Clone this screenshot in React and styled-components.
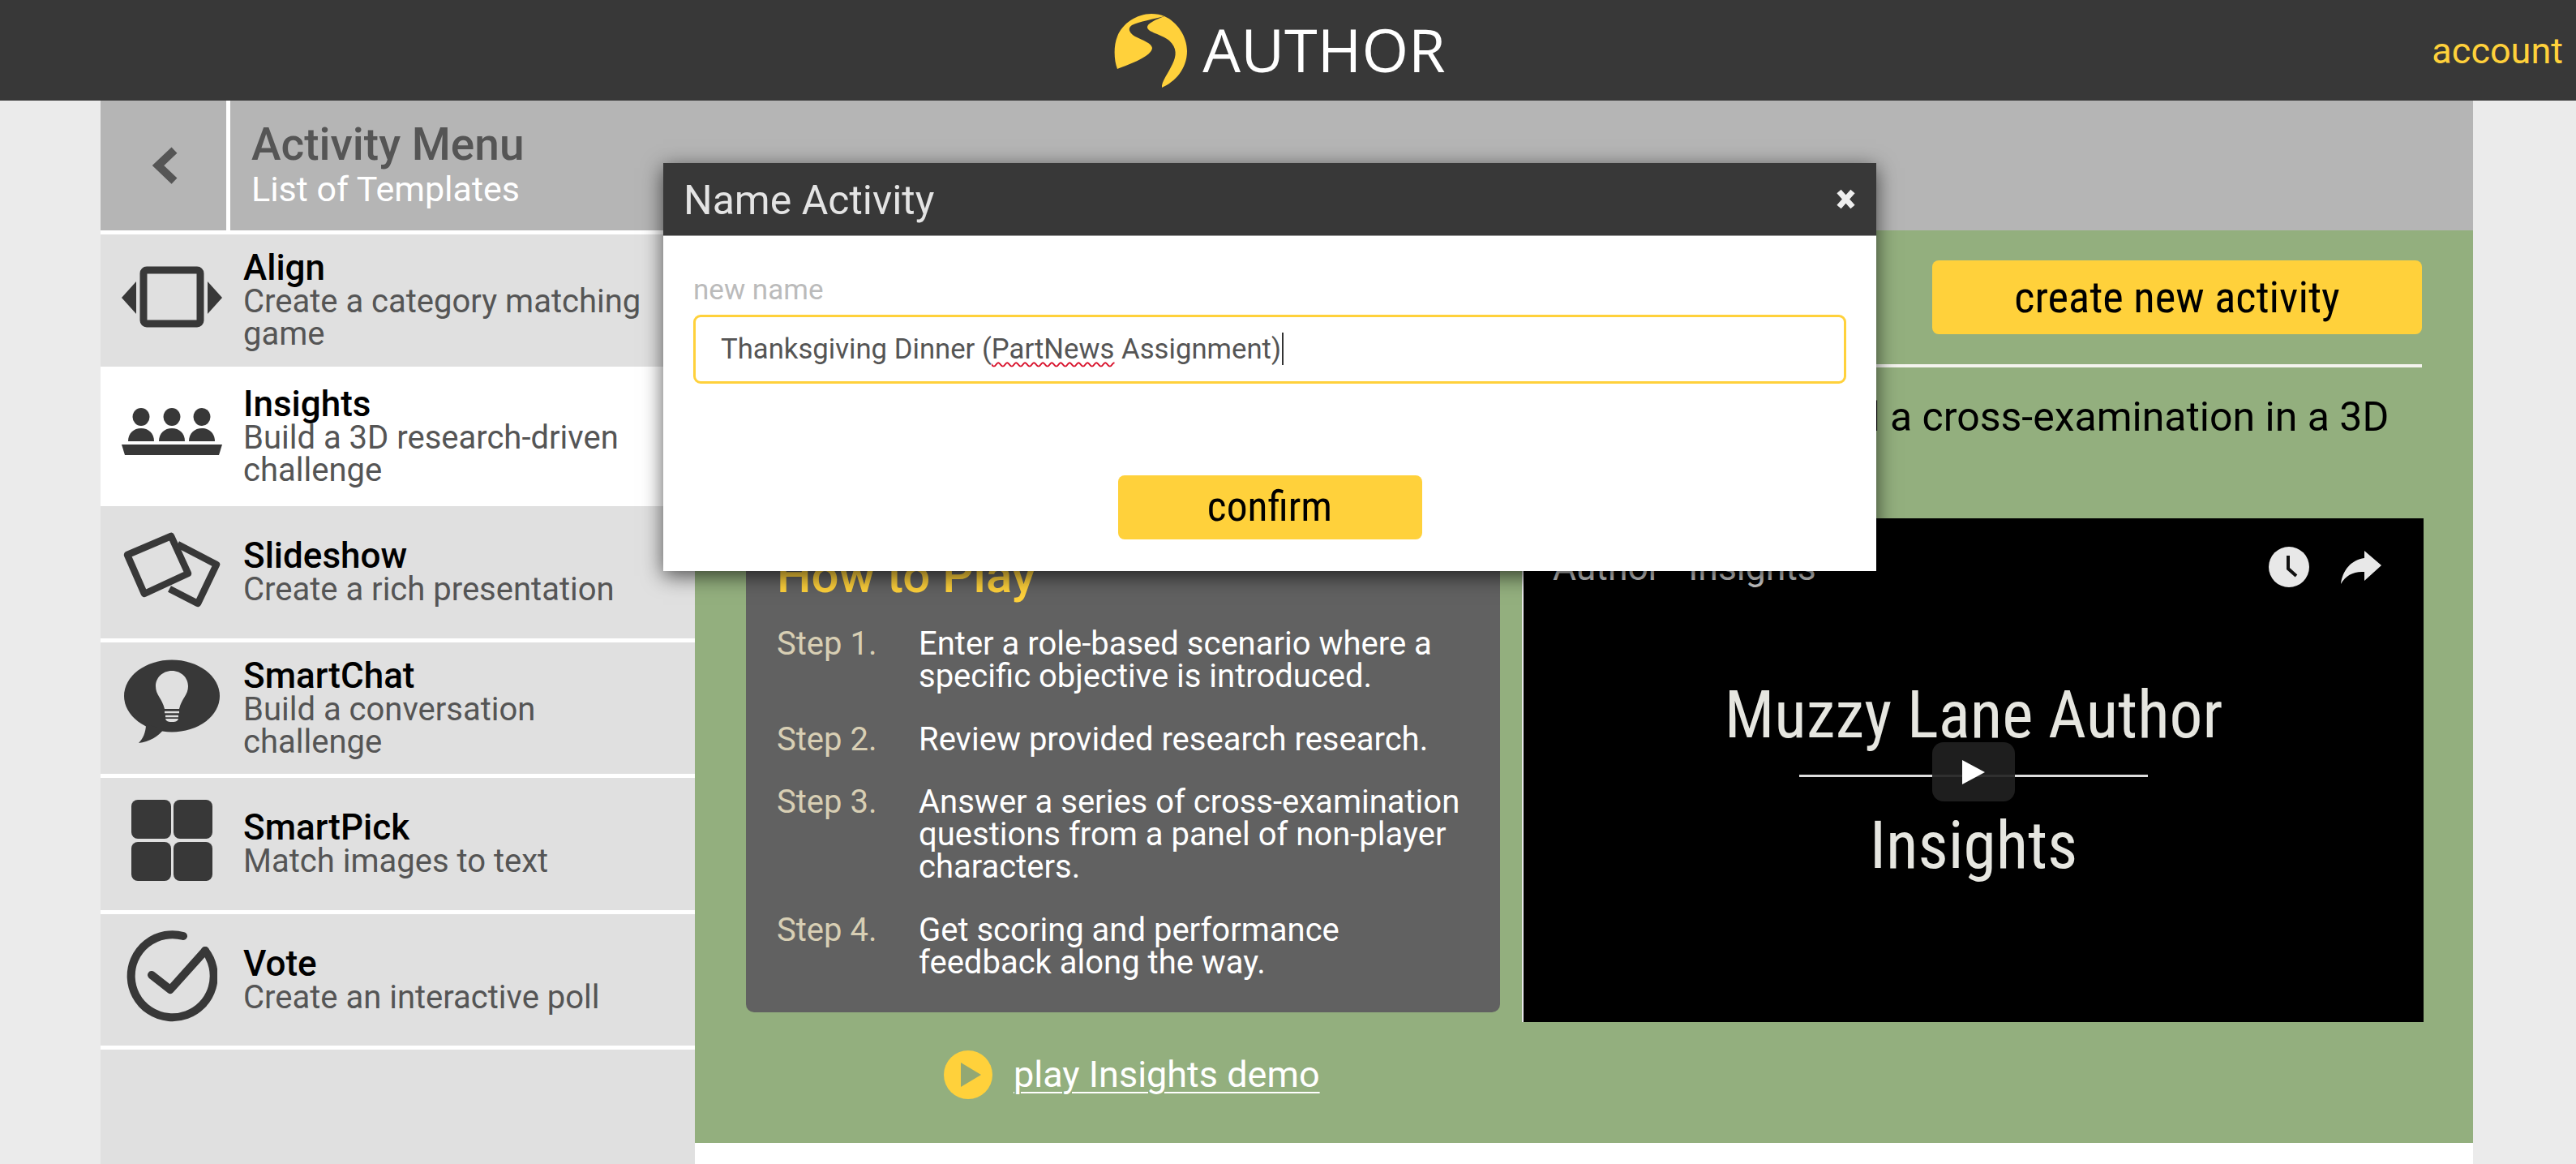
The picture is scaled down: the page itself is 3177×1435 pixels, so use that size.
import React from "react";
import styled, {createGlobalStyle} from "styled-components";

const yellow = "#ffd13b";
const dark = "#383838";

const GlobalStyle = createGlobalStyle`
    html, body {
        margin: 0;
        height: 100%;
        overflow: hidden;
        background: #ebebeb;
        font-family: Roboto, "Liberation Sans", sans-serif;
    }
    #root {
        height: 100%;
    }
`;

const Page = styled.div`
    position: relative;
    display: flex;
    flex-direction: column;
    width: 3177px;
    height: 1435px;
    overflow: hidden;
`;

const Header = styled.header`
    display: grid;
    grid-template-columns: 1fr auto 1fr;
    align-items: center;
    flex: 0 0 124px;
    background: ${dark};
`;

const Brand = styled.div`
    grid-column: 2;
    display: flex;
    align-items: center;
    gap: 18px;
    padding-right: 20px;
`;

const BrandName = styled.span`
    font-family: "Open Sans", sans-serif;
    font-size: 74px;
    font-weight: 500;
    line-height: 120px;
    padding-bottom: 2px;
    color: #fff;
`;

const Account = styled.a`
    justify-self: end;
    padding-right: 16px;
    font-size: 45px;
    color: ${yellow};
`;

const Shell = styled.div`
    display: flex;
    flex-direction: column;
    flex: 1;
    min-height: 0;
    margin: 0 127px 0 124px;
    background: #fff;
`;

const TitleBar = styled.div`
    display: flex;
    flex: 0 0 160px;
    background: #b5b5b5;
`;

const BackCell = styled.div`
    display: flex;
    align-items: center;
    justify-content: center;
    flex: 0 0 160px;
    box-sizing: border-box;
    padding-left: 4px;
    border-right: 5px solid #fff;
`;

const TitleText = styled.div`
    padding: 24px 0 0 26px;
`;

const MenuTitle = styled.div`
    font-size: 55px;
    line-height: 60px;
    font-weight: 500;
    color: #555;
`;

const MenuSubtitle = styled.div`
    font-size: 43px;
    line-height: 50px;
    color: #fff;
`;

const Body = styled.div`
    display: flex;
    flex: 1;
    min-height: 0;
`;

const Sidebar = styled.nav`
    flex: 0 0 733px;
    box-sizing: border-box;
    padding-top: 5px;
    background: #e0e0e0;
    box-shadow: inset 0 5px 0 #fff;
`;

const Item = styled.div`
    display: flex;
    align-items: center;
    box-sizing: border-box;
    height: 167.5px;
    border-bottom: 5px solid #fff;
    background: ${props => (props.$active ? "#fff" : "#e0e0e0")};
`;

const ItemIcon = styled.div`
    display: flex;
    justify-content: center;
    flex: 0 0 176px;
    margin-bottom: ${props => props.$lift}px;
`;

const ItemText = styled.div`
    width: 510px;
`;

const ItemTitle = styled.div`
    font-size: 44px;
    line-height: 44px;
    font-weight: 500;
    color: #000;
`;

const ItemDescription = styled.div`
    font-size: 40px;
    line-height: 40px;
    color: #555;
`;

const Content = styled.main`
    flex: 1;
    min-width: 0;
`;

const GreenPanel = styled.section`
    box-sizing: border-box;
    height: 1125px;
    padding: 37px 63px 0;
    background: #93af7e;
`;

const ActionRow = styled.div`
    display: flex;
    justify-content: flex-end;
    padding-bottom: 37px;
    border-bottom: 4px solid #f4f4ee;
`;

const YellowButton = styled.button`
    width: ${props => props.$width}px;
    height: ${props => props.$height}px;
    padding: 0 0 2px;
    border: 0;
    border-radius: 8px;
    background: ${yellow};
    color: #000;
    font-family: Roboto, sans-serif;
    font-stretch: 75%;
    font-size: ${props => props.$size}px;
`;

const Intro = styled.p`
    margin: 0;
    height: 186px;
    padding: 36px 0 0 8px;
    box-sizing: border-box;
    font-size: 50px;
    line-height: 50px;
    color: #000;
`;

const Columns = styled.div`
    display: grid;
    grid-template-columns: 930px 1112px;
    column-gap: 27px;
    align-items: start;
`;

const HowTo = styled.div`
    box-sizing: border-box;
    height: 609px;
    padding: 41px 30px 0 38px;
    border-radius: 10px;
    background: #616161;
`;

const HowToTitle = styled.h2`
    margin: 0 0 34px;
    font-size: 60px;
    line-height: 60px;
    font-weight: 500;
    color: ${yellow};
`;

const Step = styled.div`
    display: grid;
    grid-template-columns: 175px 1fr;
    margin-bottom: 37.5px;
    font-size: 40px;
    line-height: 40px;
`;

const StepLabel = styled.div`
    color: #d8cfb4;
`;

const StepText = styled.div`
    color: #fff;
`;

const Video = styled.div`
    position: relative;
    display: flex;
    flex-direction: column;
    align-items: center;
    box-sizing: border-box;
    height: 621px;
    padding-top: 199px;
    background: #000;
    border-left: 2px solid #e8e8e8;
`;

const VideoTitle = styled.div`
    position: absolute;
    left: 36px;
    top: 36px;
    font-size: 44.5px;
    line-height: 50px;
    color: #ccc;
`;

const VideoActions = styled.div`
    position: absolute;
    top: 35px;
    right: 52px;
    display: flex;
    align-items: center;
    gap: 39px;
`;

const SlideHeading = styled.div`
    font-stretch: 75%;
    font-size: 81.5px;
    line-height: 86px;
    color: #e6e6e0;
`;

const SlideRule = styled.div`
    width: 430px;
    height: 3px;
    margin: 31px 0 41px;
    background: #ddd;
`;

const PlayOverlay = styled.div`
    position: absolute;
    left: 504px;
    top: 276px;
    display: flex;
    align-items: center;
    justify-content: center;
    width: 102px;
    height: 73px;
    border-radius: 14px;
    background: rgba(33, 33, 33, 0.92);
`;

const DemoLink = styled.a`
    display: flex;
    align-items: center;
    gap: 26px;
    margin: 35px 0 0 244px;
    font-size: 45px;
    line-height: 60px;
    color: #fff;
    text-decoration: underline;
    text-underline-offset: 6px;
    text-decoration-thickness: 2px;
`;

const Dialog = styled.div`
    position: absolute;
    left: 818px;
    top: 201px;
    display: flex;
    flex-direction: column;
    width: 1496px;
    height: 503px;
    background: #fff;
    box-shadow: 0 6px 24px rgba(0, 0, 0, 0.65);
`;

const DialogHeader = styled.div`
    display: flex;
    align-items: center;
    justify-content: space-between;
    flex: 0 0 90px;
    padding: 0 25px;
    background: ${dark};
    border-bottom: 1px solid #999;
    box-sizing: border-box;
`;

const DialogTitle = styled.div`
    padding-top: 2px;
    font-size: 50px;
    color: #e4e4e4;
`;

const DialogBody = styled.div`
    display: flex;
    flex-direction: column;
    flex: 1;
    padding: 47px 37px 0;
`;

const FieldLabel = styled.label`
    font-size: 35px;
    line-height: 40px;
    color: #bbb;
`;

const NameField = styled.div`
    display: flex;
    align-items: center;
    box-sizing: border-box;
    height: 85px;
    margin-top: 10px;
    padding: 0 0 2px 31px;
    border: 3px solid ${yellow};
    border-radius: 9px;
    font-size: 34.7px;
    color: #555;
`;

const Misspelled = styled.span`
    text-decoration: underline wavy #d8102a 2px;
    text-underline-offset: 4px;
`;

const Caret = styled.span`
    display: inline-block;
    width: 2px;
    height: 40px;
    margin-left: 1px;
    background: #333;
`;

const DialogActions = styled.div`
    display: flex;
    justify-content: center;
    margin-top: 113px;
`;

const Logo = () => (
    <svg width="91" height="91" viewBox="0 0 91 91">
        <path fill={yellow} d="M62 3C50 6 30 10 22 14C16 18 19 24 26 28C36 33 46 36 47 42C47 52 20 62 4 68C0 58 -1 40 4 28C10 12 28 0 46 0C52 0 58 1 62 3Z"/>
        <path fill={yellow} d="M62 3C52 7 40 12 41 17C42 23 58 25 68 33C78 42 77 52 72 62C67 73 58 84 59 91C75 84 90 68 90 46C90 28 78 10 62 3Z"/>
    </svg>
);

const BackIcon = () => (
    <svg width="32" height="46" viewBox="0 0 32 46">
        <path d="M27 4L7 23L27 42" fill="none" stroke="#555" strokeWidth="10"/>
    </svg>
);

const AlignIcon = () => (
    <svg width="124" height="76" viewBox="0 0 124 76">
        <rect x="27" y="5" width="70" height="66" rx="4" fill="none" stroke={dark} strokeWidth="9"/>
        <path d="M18 19V59L0 39Z" fill={dark}/>
        <path d="M106 19V59L124 39Z" fill={dark}/>
    </svg>
);

const InsightsIcon = () => (
    <svg width="124" height="58" viewBox="0 0 124 58">
        {[24, 62, 99].map(x => (
            <g key={x} fill={dark}>
                <ellipse cx={x} cy="11" rx="10.5" ry="11"/>
                <path d={`M${x - 16} 41C${x - 16} 31 ${x - 9} 25 ${x} 25C${x + 9} 25 ${x + 16} 31 ${x + 16} 41Z`}/>
            </g>
        ))}
        <path d="M0 45H124L120 58H4Z" fill={dark}/>
    </svg>
);

const SlideshowIcon = () => (
    <svg width="126" height="100" viewBox="0 0 126 100">
        <g fill="none" stroke={dark} strokeWidth="8.5" strokeLinejoin="round">
            <path d="M8 31L62 8L83 54L29 79Z"/>
            <path d="M70 18L118 43L95 91L60 73"/>
        </g>
    </svg>
);

const SmartChatIcon = () => (
    <svg width="120" height="104" viewBox="0 0 120 104">
        <ellipse cx="60" cy="45" rx="59" ry="44.5" fill={dark}/>
        <path d="M28 80C28 90 24 98 19 103C32 102 44 94 50 86Z" fill={dark}/>
        <path d="M60 14C48 14 40 23 40 33C40 44 48 48 51 61H69C72 48 80 44 80 33C80 23 72 14 60 14Z" fill="#e0e0e0"/>
        <path d="M51 65H69M52 70H68" stroke="#e0e0e0" strokeWidth="2.5"/>
        <path d="M52 73H68C67 77 63 77 60 77C57 77 53 77 52 73Z" fill="#e0e0e0"/>
    </svg>
);

const SmartPickIcon = () => (
    <svg width="100" height="100" viewBox="0 0 100 100">
        <rect x="0" y="0" width="49" height="48" rx="8" fill={dark}/>
        <rect x="52" y="0" width="48" height="48" rx="8" fill={dark}/>
        <rect x="0" y="52" width="49" height="48" rx="8" fill={dark}/>
        <rect x="52" y="52" width="48" height="48" rx="8" fill={dark}/>
    </svg>
);

const VoteIcon = () => (
    <svg width="112" height="113" viewBox="0 0 112 113">
        <path d="M70 7A51 51 0 1 0 97 25" fill="none" stroke={dark} strokeWidth="10" strokeLinecap="round"/>
        <path d="M31 55L54 73L97 25" fill="none" stroke={dark} strokeWidth="10" strokeLinecap="round" strokeLinejoin="round"/>
    </svg>
);

const CloseIcon = () => (
    <svg width="25" height="27" viewBox="0 0 25 27">
        <path d="M4 4L21 23M21 4L4 23" stroke="#eee" strokeWidth="7"/>
    </svg>
);

const ClockIcon = () => (
    <svg width="50" height="50" viewBox="0 0 50 50">
        <circle cx="25" cy="25" r="25" fill="#e8e8e8"/>
        <path d="M24 11V27L34 36" fill="none" stroke="#111" strokeWidth="4"/>
    </svg>
);

const ShareIcon = () => (
    <svg width="50" height="41" viewBox="0 0 50 41">
        <path fill="#e8e8e8" d="M29 0L50 18L29 37V26C16 25 6 30 0 41C2 24 13 11 29 9Z"/>
    </svg>
);

const PlayDemoIcon = () => (
    <svg width="60" height="60" viewBox="0 0 60 60">
        <circle cx="30" cy="30" r="30" fill={yellow}/>
        <path d="M21 15L46 30L21 45Z" fill="#93a873"/>
    </svg>
);

const PlayTriangle = () => (
    <svg width="28" height="30" viewBox="0 0 28 30">
        <path d="M0 0L28 15L0 30Z" fill="#fff"/>
    </svg>
);

const templates = [
    {name: "Align", text: "Create a category matching game", icon: <AlignIcon/>, lift: 8},
    {name: "Insights", text: "Build a 3D research-driven challenge", icon: <InsightsIcon/>, lift: 12, active: true},
    {name: "Slideshow", text: "Create a rich presentation", icon: <SlideshowIcon/>, lift: 4},
    {name: "SmartChat", text: "Build a conversation challenge", icon: <SmartChatIcon/>, lift: 16},
    {name: "SmartPick", text: "Match images to text", icon: <SmartPickIcon/>, lift: 8},
    {name: "Vote", text: "Create an interactive poll", icon: <VoteIcon/>, lift: 8},
];

const steps = [
    "Enter a role-based scenario where a specific objective is introduced.",
    "Review provided research research.",
    "Answer a series of cross-examination questions from a panel of non-player characters.",
    "Get scoring and performance feedback along the way.",
];

const App = () => {
    return (
        <Page>
            <GlobalStyle/>
            <Header>
                <Brand>
                    <Logo/>
                    <BrandName>AUTHOR</BrandName>
                </Brand>
                <Account>account</Account>
            </Header>
            <Shell>
                <TitleBar>
                    <BackCell><BackIcon/></BackCell>
                    <TitleText>
                        <MenuTitle>Activity Menu</MenuTitle>
                        <MenuSubtitle>List of Templates</MenuSubtitle>
                    </TitleText>
                </TitleBar>
                <Body>
                    <Sidebar>
                        {templates.map(item => (
                            <Item key={item.name} $active={item.active}>
                                <ItemIcon $lift={item.lift}>{item.icon}</ItemIcon>
                                <ItemText>
                                    <ItemTitle>{item.name}</ItemTitle>
                                    <ItemDescription>{item.text}</ItemDescription>
                                </ItemText>
                            </Item>
                        ))}
                    </Sidebar>
                    <Content>
                        <GreenPanel>
                            <ActionRow>
                                <YellowButton $width={604} $height={91} $size={54.5}>create new activity</YellowButton>
                            </ActionRow>
                            <Intro>Learners research a scenario in depth with evidence, then build a cross-examination in a 3D environment.</Intro>
                            <Columns>
                                <HowTo>
                                    <HowToTitle>How to Play</HowToTitle>
                                    {steps.map((text, index) => (
                                        <Step key={index}>
                                            <StepLabel>Step {index + 1}.</StepLabel>
                                            <StepText>{text}</StepText>
                                        </Step>
                                    ))}
                                </HowTo>
                                <Video>
                                    <VideoTitle>Author - Insights</VideoTitle>
                                    <VideoActions>
                                        <ClockIcon/>
                                        <ShareIcon/>
                                    </VideoActions>
                                    <SlideHeading>Muzzy Lane Author</SlideHeading>
                                    <SlideRule/>
                                    <SlideHeading>Insights</SlideHeading>
                                    <PlayOverlay><PlayTriangle/></PlayOverlay>
                                </Video>
                            </Columns>
                            <DemoLink>
                                <PlayDemoIcon/>
                                <span>play Insights demo</span>
                            </DemoLink>
                        </GreenPanel>
                    </Content>
                </Body>
            </Shell>
            <Dialog>
                <DialogHeader>
                    <DialogTitle>Name Activity</DialogTitle>
                    <CloseIcon/>
                </DialogHeader>
                <DialogBody>
                    <FieldLabel>new name</FieldLabel>
                    <NameField>
                        <span>Thanksgiving Dinner (<Misspelled>PartNews</Misspelled> Assignment)</span>
                        <Caret/>
                    </NameField>
                    <DialogActions>
                        <YellowButton $width={375} $height={79} $size={51.5}>confirm</YellowButton>
                    </DialogActions>
                </DialogBody>
            </Dialog>
        </Page>
    );
};

export default App;
